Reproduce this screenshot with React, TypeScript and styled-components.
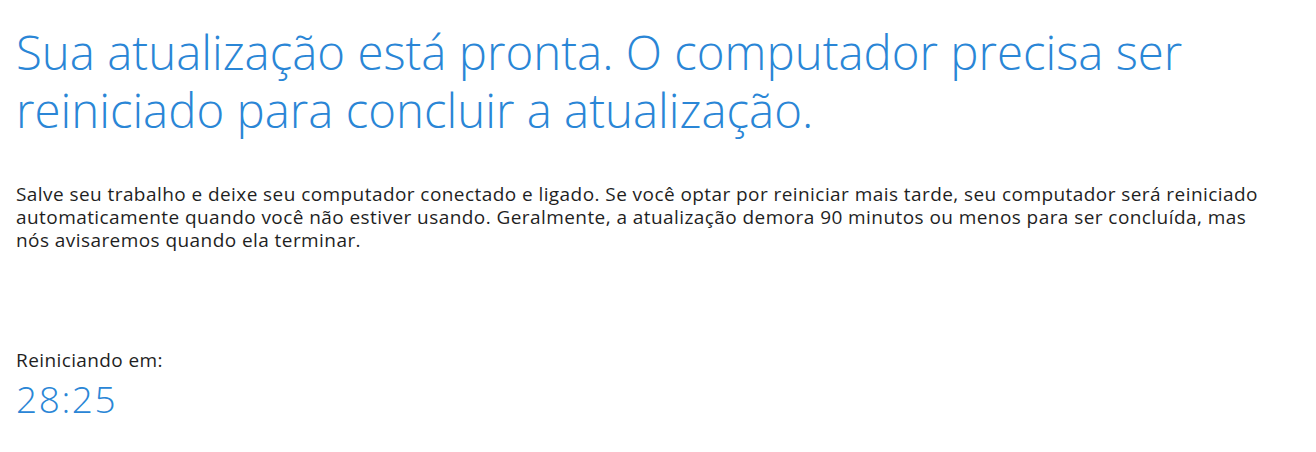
import React from 'react';
import styled, { createGlobalStyle } from 'styled-components';

const GlobalStyle = createGlobalStyle`
  html, body {
    margin: 0;
    padding: 0;
    background: #ffffff;
  }
  body {
    font-family: "Open Sans", "Segoe UI", sans-serif;
  }
`;

const Page = styled.div`
  box-sizing: border-box;
  width: 1316px;
  height: 452px;
  padding: 23px 16px 0 16px;
  display: flex;
  flex-direction: column;
`;

const Title = styled.h1`
  margin: 0;
  font-size: 47.4px;
  font-weight: 300;
  line-height: 58px;
  color: #2a86d6;
  max-width: 1220px;
`;

const Message = styled.p`
  margin: 44px 0 0 0;
  font-size: 19px;
  font-weight: 400;
  line-height: 23px;
  letter-spacing: 0.43px;
  color: #1f1f1f;
  max-width: 1256px;
`;

const Countdown = styled.div`
  margin-top: 97px;
  display: flex;
  flex-direction: column;
`;

const Label = styled.span`
  font-size: 19px;
  line-height: 23px;
  letter-spacing: 0.4px;
  color: #1f1f1f;
`;

const Timer = styled.span`
  margin-top: 4px;
  font-size: 37px;
  font-weight: 300;
  line-height: 46px;
  letter-spacing: 1.6px;
  color: #2a86d6;
`;

export default function App() {
  return (
    <>
      <GlobalStyle />
      <Page>
        <Title>
          Sua atualização está pronta. O computador precisa ser reiniciado para concluir a atualização.
        </Title>
        <Message>
          Salve seu trabalho e deixe seu computador conectado e ligado. Se você optar por reiniciar mais tarde, seu computador será reiniciado automaticamente quando você não estiver usando. Geralmente, a atualização demora 90 minutos ou menos para ser concluída, mas nós avisaremos quando ela terminar.
        </Message>
        <Countdown>
          <Label>Reiniciando em:</Label>
          <Timer>28:25</Timer>
        </Countdown>
      </Page>
    </>
  );
}
